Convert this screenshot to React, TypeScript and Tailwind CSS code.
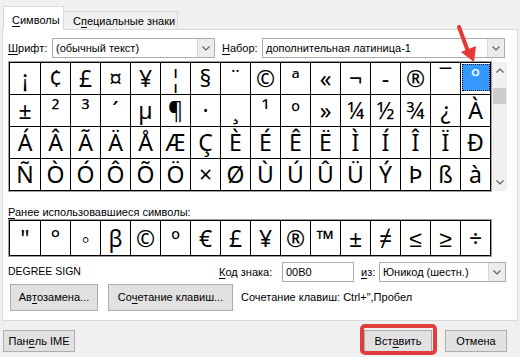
const row1 = ["¡", "¢", "£", "¤", "¥", "¦", "§", "¨", "©", "ª", "«", "¬", "-", "®", "¯", "°"];
const row2 = ["±", "²", "³", "´", "µ", "¶", "·", "¸", "¹", "º", "»", "¼", "½", "¾", "¿", "À"];
const row3 = ["Á", "Â", "Ã", "Ä", "Å", "Æ", "Ç", "È", "É", "Ê", "Ë", "Ì", "Í", "Î", "Ï", "Ð"];
const row4 = ["Ñ", "Ò", "Ó", "Ô", "Õ", "Ö", "×", "Ø", "Ù", "Ú", "Û", "Ü", "Ý", "Þ", "ß", "à"];
const recent = ['"', "°", "◦", "β", "©", "º", "€", "£", "¥", "®", "™", "±", "≠", "≤", "≥", "÷"];

const Chevron = () => (
    <svg width="8" height="5" viewBox="0 0 8 5" fill="none">
        <path d="M0.5 0.5L4 4L7.5 0.5" stroke="#606060" strokeWidth="1.2" />
    </svg>
);

const Combo: React.FC<{ text: string; w: string }> = ({ text, w }) => (
    <div className={`${w} h-[20px] flex border border-[#abadb3] bg-white`}>
        <div className="flex-1 pl-[3px] leading-[18px] truncate">{text}</div>
        <div className="w-[17px] flex items-center justify-center bg-[#ececec] border-l border-[#d6d6d6]">
            <Chevron />
        </div>
    </div>
);

const Btn: React.FC<{ children: React.ReactNode; w: string; h: string }> = ({ children, w, h }) => (
    <div className={`${w} ${h} flex items-center justify-center bg-[#e1e1e1] border border-[#adadad] whitespace-nowrap`}>
        {children}
    </div>
);

const U: React.FC<{ children: React.ReactNode }> = ({ children }) => <span className="underline underline-offset-2">{children}</span>;

const App: React.FC = () => {
    return (
        <div className="w-[520px] h-[357px] bg-[#f0f0f0] relative overflow-hidden text-[11px] text-black whitespace-nowrap font-['Liberation_Sans',Arial,sans-serif]">
            {/* tabs */}
            <div className="flex items-end pl-[3px] pt-[5px] h-[29px]">
                <div className="w-[61px] h-[24px] pl-[8px] pt-[5px] bg-white border border-b-0 border-[#d9d9d9] relative z-10 mb-[-1px]">
                    <U>С</U>имволы
                </div>
                <div className="w-[114px] h-[18px] pl-[9px] leading-[18px] border border-l-0 border-b-0 border-[#d9d9d9]">
                    С<U>п</U>ециальные знаки
                </div>
            </div>
            {/* panel */}
            <div className="mx-[2px] h-[292px] bg-white border border-[#d9d9d9] flex flex-col">
                <div className="flex items-center h-[20px] mt-[8px] pl-[5px]">
                    <span className="w-[44px]"><U>Ш</U>рифт:</span>
                    <Combo text="(обычный текст)" w="w-[163px]" />
                    <span className="ml-[7px] w-[40px]"><U>Н</U>абор:</span>
                    <Combo text="дополнительная латиница-1" w="w-[243px]" />
                </div>
                <div className="flex mt-[4px] ml-[6px]">
                    <div className="border border-black outline outline-[#a0a0a0] font-['Noto_Sans',sans-serif] text-[23px]">
                        {[row1, row2, row3, row4].map((row, ri) => (
                            <div key={ri} className={`flex ${ri > 0 ? "border-t border-black" : ""}`}>
                                {row.map((c, ci) => {
                                    const sel = ri === 0 && ci === 15;
                                    return (
                                        <div
                                            key={ci}
                                            className={`w-[30px] h-[31px] flex items-center justify-center ${ci > 0 ? "border-l border-black" : ""}`}
                                        >
                                            {sel ? (
                                                <div className="w-[28px] h-[27px] mb-[2px] bg-[#3399ff] border border-dotted border-[#1a1a1a] text-white flex items-center justify-center leading-none">
                                                    {c}
                                                </div>
                                            ) : (
                                                <span className="leading-none">{c}</span>
                                            )}
                                        </div>
                                    );
                                })}
                            </div>
                        ))}
                    </div>
                    {/* scrollbar */}
                    <div className="w-[15px] ml-[1px] bg-[#f0f0f0] flex flex-col items-center">
                        <div className="h-[17px] flex items-center justify-center rotate-180">
                            <Chevron />
                        </div>
                        <div className="w-[13px] h-[16px] mt-[9px] bg-[#cdcdcd]" />
                        <div className="flex-1" />
                        <div className="h-[17px] flex items-center justify-center">
                            <Chevron />
                        </div>
                    </div>
                </div>
                <div className="mt-[13px] ml-[5px] h-[16px] leading-[16px]">
                    <U>Р</U>анее использовавшиеся символы:
                </div>
                <div className="ml-[6px] w-fit flex border border-black outline outline-[#a0a0a0] text-[23px] font-['Noto_Sans',sans-serif]">
                    {recent.map((c, i) => (
                        <div
                            key={i}
                            className={`w-[30px] h-[34px] flex items-center justify-center leading-none ${i > 0 ? "border-l border-black" : ""}`}
                        >
                            {c}
                        </div>
                    ))}
                </div>
                <div className="flex items-center h-[20px] mt-[6px] pl-[5px]">
                    <span className="w-[211px] text-[10.5px]">DEGREE SIGN</span>
                    <span className="w-[63px]"><U>К</U>од знака:</span>
                    <div className="w-[72px] h-[20px] border border-[#abadb3] pl-[3px] leading-[18px]">00B0</div>
                    <span className="ml-[7px] w-[18px]"><U>и</U>з:</span>
                    <Combo text="Юникод (шестн.)" w="w-[127px]" />
                </div>
                <div className="flex items-center mt-[2px] pl-[7px]">
                    <Btn w="w-[88px]" h="h-[27px]">Ав<U>т</U>озамена...</Btn>
                    <div className="ml-[10px]">
                        <Btn w="w-[125px]" h="h-[27px]">Со<U>ч</U>етание клавиш...</Btn>
                    </div>
                    <span className="ml-[8px]">Сочетание клавиш: Ctrl+",Пробел</span>
                </div>
            </div>
            {/* bottom buttons */}
            <div className="flex items-center mt-[9px] pl-[3px]">
                <Btn w="w-[72px]" h="h-[22px]">Пан<U>е</U>ль IME</Btn>
                <div className="ml-auto flex gap-[13px] mr-[13px]">
                    <Btn w="w-[68px]" h="h-[22px]">Вст<U>а</U>вить</Btn>
                    <Btn w="w-[62px]" h="h-[22px]">Отмена</Btn>
                </div>
            </div>
            {/* annotations */}
            <div className="absolute left-[360px] top-[324px] w-[77px] h-[31px] border-[4px] border-[#e23d3d] rounded-[5px]" />
            <svg className="absolute left-[450px] top-[22px]" width="35" height="45" viewBox="0 0 35 45">
                <path d="M9 5L19 32" stroke="#e53935" strokeWidth="4" strokeLinecap="round" />
                <path d="M11 30L24 40L26 24Z" fill="#e53935" />
            </svg>
        </div>
    );
};

export default App;
